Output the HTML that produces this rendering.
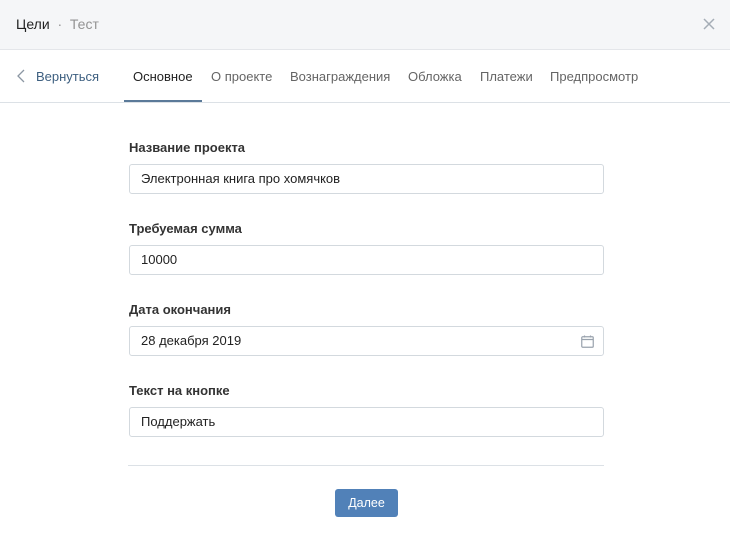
<!DOCTYPE html>
<html><head><meta charset="utf-8"><style>
*{box-sizing:border-box;margin:0;padding:0}
body{width:730px;height:533px;background:#fff;font-family:"Liberation Sans","DejaVu Sans",sans-serif;font-size:13px;color:#000;position:relative;overflow:hidden}
.hdr{position:absolute;left:0;top:0;width:730px;height:50px;background:#f5f6f8;border-bottom:1px solid #e4e6ea}
.hdr .t{position:absolute;left:16px;top:16px;font-size:14px;color:#222}
.hdr .t span{color:#939393}
.x{position:absolute;right:14px;top:17px}
.tabs{position:absolute;left:0;top:51px;width:730px;height:52px;border-bottom:1px solid #dce1e6}
.tab{position:absolute;top:18px;font-size:13px;color:#656565}
.tab.a{color:#222}
.ul{position:absolute;left:124px;top:49px;width:78px;height:2px;background:#5b7a99}
.lbl{position:absolute;left:129px;font-size:13px;font-weight:bold;color:#333}
.inp{position:absolute;left:129px;width:475px;height:30px;border:1px solid #d3d9de;border-radius:3px;padding:0 11px;line-height:28px;font-size:13px;color:#222}
.hr{position:absolute;left:128px;top:465px;width:476px;height:1px;background:#dce1e6}
.btn{position:absolute;left:335px;top:489px;width:63px;height:28px;background:#5181b8;border-radius:3px;color:#fff;font-size:12.5px;text-align:center;line-height:29px}
</style></head><body>
<div class="hdr"><div class="t">Цели <span>&nbsp;·&nbsp; Тест</span></div>
<svg class="x" width="14" height="14" viewBox="0 0 14 14"><path d="M2 2L12 12M12 2L2 12" stroke="#a5adb6" stroke-width="1.5"/></svg></div>
<div class="tabs">
<svg style="position:absolute;left:16px;top:18px" width="10" height="14" viewBox="0 0 10 14"><path d="M8 1L2 7L8 13" stroke="#8c97a3" stroke-width="1.3" fill="none"/></svg>
<div class="tab" style="left:36px;color:#3d5f80">Вернуться</div>
<div class="tab a" style="left:133px">Основное</div>
<div class="tab" style="left:211px">О проекте</div>
<div class="tab" style="left:290px">Вознаграждения</div>
<div class="tab" style="left:408px">Обложка</div>
<div class="tab" style="left:480px">Платежи</div>
<div class="tab" style="left:550px">Предпросмотр</div>
<div class="ul"></div>
</div>
<div class="lbl" style="top:140px">Название проекта</div>
<div class="inp" style="top:164px">Электронная книга про хомячков</div>
<div class="lbl" style="top:221px">Требуемая сумма</div>
<div class="inp" style="top:245px">10000</div>
<div class="lbl" style="top:302px">Дата окончания</div>
<div class="inp" style="top:326px">28 декабря 2019
<svg style="position:absolute;right:9px;top:8px" width="13" height="13" viewBox="0 0 13 13"><rect x="0.75" y="1.75" width="11.5" height="10.5" rx="1" stroke="#99a2ad" stroke-width="1.2" fill="none"/><path d="M1 4.5H12M3.5 0.5V2.5M9.5 0.5V2.5" stroke="#99a2ad" stroke-width="1.2"/></svg></div>
<div class="lbl" style="top:383px">Текст на кнопке</div>
<div class="inp" style="top:407px">Поддержать</div>
<div class="hr"></div>
<div class="btn">Далее</div>
</body></html>
